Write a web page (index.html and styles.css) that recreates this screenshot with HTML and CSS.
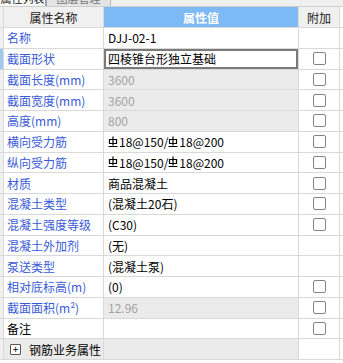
FILE: index.html
```html
<!DOCTYPE html>
<html>
<head>
  <meta charset="utf-8">
  <title>属性列表</title>
  <link rel="stylesheet" href="styles.css">
</head>
<body>
  <div class="tabs">
    <div class="tab active"><span>属性列表</span></div>
    <div class="tab"><span>图层管理</span></div>
  </div>

  <div class="grid">
    <div class="row head">
      <div class="gut"></div>
      <div class="name">属性名称</div>
      <div class="val">属性值</div>
      <div class="ext">附加</div>
    </div>

    <div class="row">
      <div class="gut"></div>
      <div class="name">名称</div>
      <div class="val">DJJ-02-1</div>
      <div class="ext"></div>
    </div>
    <div class="row">
      <div class="gut sel"></div>
      <div class="name">截面形状</div>
      <div class="val editing">四棱锥台形独立基础</div>
      <div class="ext"><span class="chk"></span></div>
    </div>
    <div class="row">
      <div class="gut"></div>
      <div class="name">截面长度(mm)</div>
      <div class="val off">3600</div>
      <div class="ext"><span class="chk"></span></div>
    </div>
    <div class="row">
      <div class="gut"></div>
      <div class="name">截面宽度(mm)</div>
      <div class="val off">3600</div>
      <div class="ext"><span class="chk"></span></div>
    </div>
    <div class="row">
      <div class="gut"></div>
      <div class="name">高度(mm)</div>
      <div class="val off">800</div>
      <div class="ext"><span class="chk"></span></div>
    </div>
    <div class="row">
      <div class="gut"></div>
      <div class="name">横向受力筋</div>
      <div class="val"><svg class="bar" viewBox="0 0 10 12"><path d="M5 0.5V9.5M1.5 3.5H8.5V7.5H1.5ZM0.5 10.5H9.5" fill="none" stroke="#000" stroke-width="1.2"/></svg>18@150/<svg class="bar" viewBox="0 0 10 12"><path d="M5 0.5V9.5M1.5 3.5H8.5V7.5H1.5ZM0.5 10.5H9.5" fill="none" stroke="#000" stroke-width="1.2"/></svg>18@200</div>
      <div class="ext"><span class="chk"></span></div>
    </div>
    <div class="row">
      <div class="gut"></div>
      <div class="name">纵向受力筋</div>
      <div class="val"><svg class="bar" viewBox="0 0 10 12"><path d="M5 0.5V9.5M1.5 3.5H8.5V7.5H1.5ZM0.5 10.5H9.5" fill="none" stroke="#000" stroke-width="1.2"/></svg>18@150/<svg class="bar" viewBox="0 0 10 12"><path d="M5 0.5V9.5M1.5 3.5H8.5V7.5H1.5ZM0.5 10.5H9.5" fill="none" stroke="#000" stroke-width="1.2"/></svg>18@200</div>
      <div class="ext"><span class="chk"></span></div>
    </div>
    <div class="row">
      <div class="gut"></div>
      <div class="name">材质</div>
      <div class="val">商品混凝土</div>
      <div class="ext"><span class="chk"></span></div>
    </div>
    <div class="row">
      <div class="gut"></div>
      <div class="name">混凝土类型</div>
      <div class="val">(混凝土20石)</div>
      <div class="ext"><span class="chk"></span></div>
    </div>
    <div class="row">
      <div class="gut"></div>
      <div class="name">混凝土强度等级</div>
      <div class="val">(C30)</div>
      <div class="ext"><span class="chk"></span></div>
    </div>
    <div class="row">
      <div class="gut"></div>
      <div class="name">混凝土外加剂</div>
      <div class="val">(无)</div>
      <div class="ext"></div>
    </div>
    <div class="row">
      <div class="gut"></div>
      <div class="name">泵送类型</div>
      <div class="val">(混凝土泵)</div>
      <div class="ext"></div>
    </div>
    <div class="row">
      <div class="gut"></div>
      <div class="name">相对底标高(m)</div>
      <div class="val">(0)</div>
      <div class="ext"><span class="chk"></span></div>
    </div>
    <div class="row">
      <div class="gut"></div>
      <div class="name">截面面积(m²)</div>
      <div class="val off">12.96</div>
      <div class="ext"><span class="chk"></span></div>
    </div>
    <div class="row">
      <div class="gut"></div>
      <div class="name plain">备注</div>
      <div class="val"></div>
      <div class="ext"><span class="chk"></span></div>
    </div>
    <div class="row group">
      <div class="gut"></div>
      <div class="name plain"><span class="plus">+</span>钢筋业务属性</div>
      <div class="val"></div>
      <div class="ext"></div>
    </div>
  </div>
</body>
</html>
```

FILE: styles.css
```css
body {
  margin: 0;
  font-family: "Noto Sans CJK SC", "Noto Sans", sans-serif;
  font-size: 12px;
  background: #fff;
  color: #000;
  width: 343px;
  overflow: hidden;
}

/* tab strip, mostly scrolled out of view */
.tabs {
  display: flex;
  height: 6px;
  border-bottom: 1px solid #cfcfcf;
  background: #f0f0f0;
  overflow: hidden;
}
.tab {
  width: 63px;
  background: #e4e4e4;
  border-right: 1px solid #b8b8b8;
  color: #777;
  text-align: center;
  overflow: hidden;
}
.tab.active {
  width: 45px;
  background: #fafafa;
  color: #222;
  border-right: 2px solid #a0a0a0;
}
.tab span {
  display: block;
  font-size: 11px;
  line-height: 11px;
  margin-top: -7px;
}

/* property grid */
.row {
  display: grid;
  grid-template-columns: 4px 100px 195px 41px;
  height: 20.75px;
  box-sizing: border-box;
  border-bottom: 1px solid #d9d9d9;
}
.row > div {
  border-right: 1px solid #d9d9d9;
  display: flex;
  align-items: center;
  white-space: nowrap;
  overflow: hidden;
}
.row.head {
  height: 21px;
}
.gut {
  background: #f0f0f0;
}
.gut.sel {
  background: #9ccaf4;
}
.name {
  padding-left: 3px;
  color: #3a5ad9;
}
.name.plain {
  color: #000;
}
.val {
  padding-left: 4px;
}
.ext {
  justify-content: center;
}
.head .name {
  background: #f0f0f0;
  color: #222;
  justify-content: center;
  padding: 0;
}
.head .val {
  background: #7db9f4;
  color: #fff;
  font-weight: bold;
  justify-content: center;
  padding: 0;
}
.head .ext {
  background: #f0f0f0;
  color: #222;
}
.val.off {
  background: #ebebeb;
  color: #a3a3a3;
}
.val.editing {
  box-shadow: inset 0 0 0 2px #7a7a7a;
}
.chk {
  width: 11px;
  height: 11px;
  border: 1px solid #848484;
  border-radius: 2px;
  background: #fff;
}
.bar {
  width: 10px;
  height: 12px;
  margin-right: 1px;
}
.group .name,
.group .val {
  background: #ebebeb;
}
.plus {
  width: 9px;
  height: 9px;
  border: 1px solid #555;
  border-radius: 1px;
  display: flex;
  align-items: center;
  justify-content: center;
  font-size: 10px;
  line-height: 1;
  margin: 0 8px 0 3px;
  background: #fff;
}
```
